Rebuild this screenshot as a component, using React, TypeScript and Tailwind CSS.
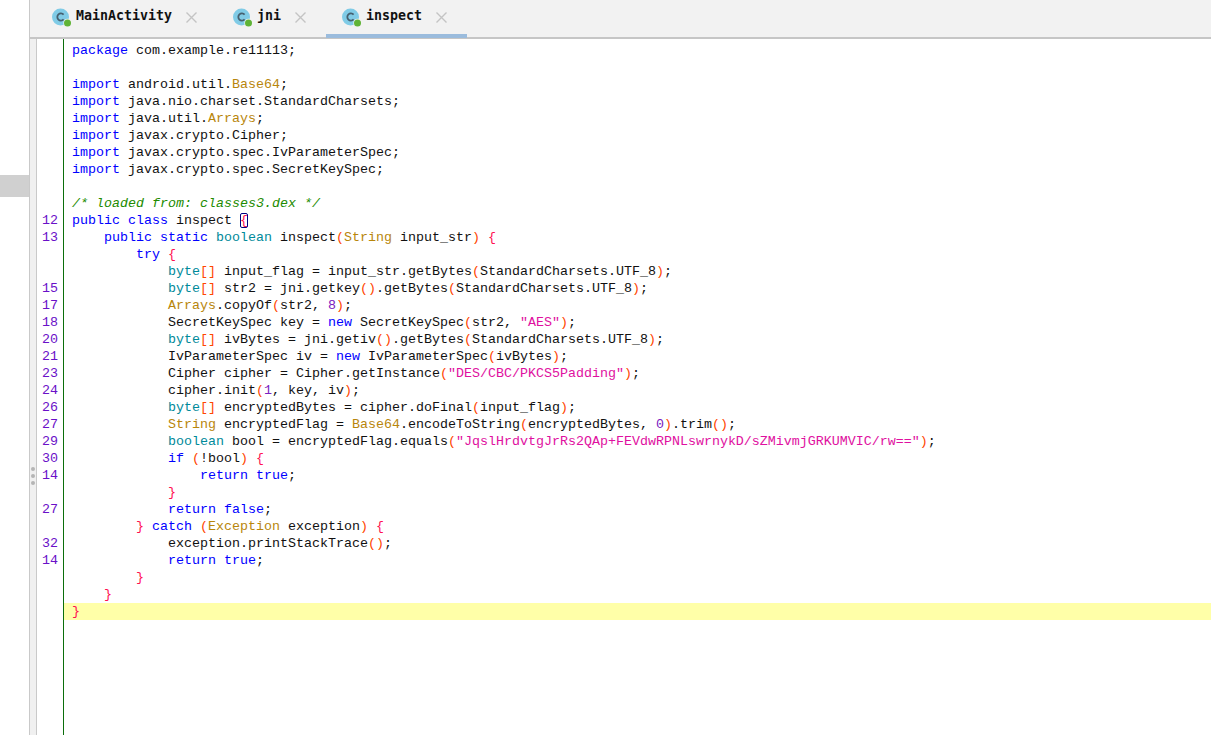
import React from 'react';

// token kinds: k keyword, t primitive type, c class ref, p paren, b brace, s string, n number, m comment
type Tok = [string, string?];
type Line = { no?: string; indent?: number; toks: Tok[]; current?: boolean };

const colors: Record<string, string> = {
  k: 'text-[#0000ff]',
  t: 'text-[#008a9a]',
  c: 'text-[#b8860b]',
  p: 'text-[#ff4500]',
  b: 'text-[#ff0f50]',
  s: 'text-[#e010a0]',
  n: 'text-[#7a20c0]',
  m: 'text-[#228b00] italic',
};

const lines: Line[] = [
  { toks: [['package', 'k'], [' com.example.re11113;']] },
  { toks: [] },
  { toks: [['import', 'k'], [' android.util.'], ['Base64', 'c'], [';']] },
  { toks: [['import', 'k'], [' java.nio.charset.StandardCharsets;']] },
  { toks: [['import', 'k'], [' java.util.'], ['Arrays', 'c'], [';']] },
  { toks: [['import', 'k'], [' javax.crypto.Cipher;']] },
  { toks: [['import', 'k'], [' javax.crypto.spec.IvParameterSpec;']] },
  { toks: [['import', 'k'], [' javax.crypto.spec.SecretKeySpec;']] },
  { toks: [] },
  { toks: [['/* loaded from: classes3.dex */', 'm']] },
  { no: '12', toks: [['public class', 'k'], [' inspect '], ['{', 'x']] },
  { no: '13', indent: 1, toks: [['public static', 'k'], [' '], ['boolean', 't'], [' inspect'], ['(', 'p'], ['String', 'c'], [' input_str'], [')', 'p'], [' '], ['{', 'b']] },
  { indent: 2, toks: [['try', 'k'], [' '], ['{', 'b']] },
  { indent: 3, toks: [['byte', 't'], ['[]', 'p'], [' input_flag = input_str.getBytes'], ['(', 'p'], ['StandardCharsets.UTF_8'], [')', 'p'], [';']] },
  { no: '15', indent: 3, toks: [['byte', 't'], ['[]', 'p'], [' str2 = jni.getkey'], ['()', 'p'], ['.getBytes'], ['(', 'p'], ['StandardCharsets.UTF_8'], [')', 'p'], [';']] },
  { no: '17', indent: 3, toks: [['Arrays', 'c'], ['.copyOf'], ['(', 'p'], ['str2, '], ['8', 'n'], [')', 'p'], [';']] },
  { no: '18', indent: 3, toks: [['SecretKeySpec key = '], ['new', 'k'], [' SecretKeySpec'], ['(', 'p'], ['str2, '], ['"AES"', 's'], [')', 'p'], [';']] },
  { no: '20', indent: 3, toks: [['byte', 't'], ['[]', 'p'], [' ivBytes = jni.getiv'], ['()', 'p'], ['.getBytes'], ['(', 'p'], ['StandardCharsets.UTF_8'], [')', 'p'], [';']] },
  { no: '21', indent: 3, toks: [['IvParameterSpec iv = '], ['new', 'k'], [' IvParameterSpec'], ['(', 'p'], ['ivBytes'], [')', 'p'], [';']] },
  { no: '23', indent: 3, toks: [['Cipher cipher = Cipher.getInstance'], ['(', 'p'], ['"DES/CBC/PKCS5Padding"', 's'], [')', 'p'], [';']] },
  { no: '24', indent: 3, toks: [['cipher.init'], ['(', 'p'], ['1', 'n'], [', key, iv'], [')', 'p'], [';']] },
  { no: '26', indent: 3, toks: [['byte', 't'], ['[]', 'p'], [' encryptedBytes = cipher.doFinal'], ['(', 'p'], ['input_flag'], [')', 'p'], [';']] },
  { no: '27', indent: 3, toks: [['String', 'c'], [' encryptedFlag = '], ['Base64', 'c'], ['.encodeToString'], ['(', 'p'], ['encryptedBytes, '], ['0', 'n'], [')', 'p'], ['.trim'], ['()', 'p'], [';']] },
  { no: '29', indent: 3, toks: [['boolean', 't'], [' bool = encryptedFlag.equals'], ['(', 'p'], ['"JqslHrdvtgJrRs2QAp+FEVdwRPNLswrnykD/sZMivmjGRKUMVIC/rw=="', 's'], [')', 'p'], [';']] },
  { no: '30', indent: 3, toks: [['if', 'k'], [' '], ['(', 'p'], ['!bool'], [')', 'p'], [' '], ['{', 'b']] },
  { no: '14', indent: 4, toks: [['return true', 'k'], [';']] },
  { indent: 3, toks: [['}', 'b']] },
  { no: '27', indent: 3, toks: [['return false', 'k'], [';']] },
  { indent: 2, toks: [['}', 'b'], [' '], ['catch', 'k'], [' '], ['(', 'p'], ['Exception', 'c'], [' exception'], [')', 'p'], [' '], ['{', 'b']] },
  { no: '32', indent: 3, toks: [['exception.printStackTrace'], ['()', 'p'], [';']] },
  { no: '14', indent: 3, toks: [['return true', 'k'], [';']] },
  { indent: 2, toks: [['}', 'b']] },
  { indent: 1, toks: [['}', 'b']] },
  { toks: [['}', 'b']], current: true },
];

const ClassIcon: React.FC = () => (
  <svg width="20" height="20" viewBox="0 0 20 20" className="shrink-0">
    <circle cx="8.5" cy="9" r="8.5" fill="#80cbe6" />
    <path d="M11.6 6.6a3.6 3.6 0 1 0 0 4.8" fill="none" stroke="#46606f" strokeWidth="1.8" />
    <circle cx="15.5" cy="15" r="4.2" fill="#f2f2f2" />
    <circle cx="15.5" cy="15" r="3.5" fill="#5fb336" />
  </svg>
);

const Tab: React.FC<{ title: string; active?: boolean; width: string }> = ({ title, active, width }) => (
  <div className={`flex h-[38px] items-start pt-[8px] pl-4 ${width} ${active ? 'border-b-4 border-[#9bbcdd]' : ''}`}>
    <ClassIcon />
    <span className="ml-[4px] text-[13.29px] font-bold leading-[15px] text-[#111] font-['DejaVu_Sans_Mono',monospace]">{title}</span>
    <svg width="11" height="11" viewBox="0 0 11 11" className="ml-[14px] mt-[4px] shrink-0">
      <path d="M0.5 0.5l10 10M10.5 0.5l-10 10" stroke="#c4c4c4" strokeWidth="1.4" />
    </svg>
  </div>
);

const App: React.FC = () => {
  return (
    <div className="flex h-[735px] w-[1211px] overflow-hidden bg-white">
      {/* left tool strip */}
      <div className="w-[29px] shrink-0 pt-[175px]">
        <div className="h-[22px] bg-[#d0d0d0]" />
      </div>
      <div className="flex w-[8px] shrink-0 flex-col items-center gap-[3px] border-x border-[#c9c9c9] bg-[#f0f0f0] pt-[467px]">
        <div className="h-[4px] w-[4px] rounded-full bg-[#b5b5b5]" />
        <div className="h-[4px] w-[4px] rounded-full bg-[#b5b5b5]" />
        <div className="h-[4px] w-[4px] rounded-full bg-[#b5b5b5]" />
      </div>

      <div className="flex min-w-0 flex-1 flex-col">
        {/* tabs */}
        <div className="flex h-[39px] shrink-0 border-b-2 border-[#c6c6c6] bg-[#f2f2f2] -ml-[7px] pl-[6px]">
          <Tab title="MainActivity" width="w-[181px]" />
          <Tab title="jni" width="w-[109px]" />
          <Tab title="inspect" width="w-[141px]" active />
        </div>

        {/* editor */}
        <div className="flex min-h-0 flex-1 font-['Liberation_Mono',monospace] text-[13.33px] leading-[17px]">
          <div className="w-[26px] shrink-0 pt-[3px]">
            {lines.map((l, i) => (
              <div key={i} className="h-[17px] pr-[5px] text-right text-[#6a10c8]">{l.no}</div>
            ))}
          </div>
          <div className="min-w-0 flex-1 border-l border-[#0b6e0b] pt-[3px]">
            {lines.map((l, i) => (
              <div
                key={i}
                className={`h-[17px] whitespace-pre pl-[8px] text-[#111] ${l.current ? 'bg-[#ffffa8]' : ''}`}
              >
                {'    '.repeat(l.indent ?? 0)}
                {l.toks.map((t, j) =>
                  t[1] === 'x' ? (
                    <span key={j} className="rounded-[2px] text-[#ff0f50] outline outline-1 -outline-offset-1 outline-[#000080]">{t[0]}</span>
                  ) : (
                    <span key={j} className={t[1] ? colors[t[1]] : ''}>{t[0]}</span>
                  ),
                )}
              </div>
            ))}
          </div>
        </div>
      </div>
    </div>
  );
};

export default App;
